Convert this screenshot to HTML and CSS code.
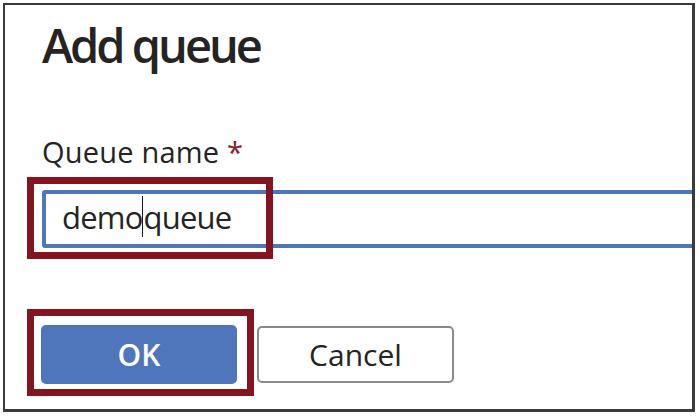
FILE: index.html
```html
<!DOCTYPE html>
<html lang="en">
<head>
<meta charset="utf-8">
<title>Add queue</title>
<link rel="stylesheet" href="styles.css">
</head>
<body>
<div class="frame">
  <h1 class="title">Add queue</h1>
  <div class="label">Queue name <span class="req">*</span></div>
  <div class="field">
    <div class="input"><span>demo</span><span class="caret"></span><span>queue</span></div>
    <div class="mark mark-input"></div>
  </div>
  <div class="actions">
    <div class="mark-btn"><button class="btn btn-primary" type="button">OK</button></div>
    <button class="btn btn-default" type="button">Cancel</button>
  </div>
</div>
</body>
</html>
```
FILE: styles.css
```css
html, body {
  margin: 0;
  padding: 0;
  background: #ffffff;
}
body {
  padding: 3px 0 0 3px;
  font-family: "Open Sans", "Noto Sans", sans-serif;
  color: #252423;
}
.frame {
  box-sizing: border-box;
  width: 692px;
  height: 409px;
  border: 2px solid #3a3a3a;
  border-right-width: 3px;
  border-bottom-width: 3px;
  padding: 12px 0 0 37px;
  overflow: hidden;
  background: #ffffff;
}
.title {
  margin: 0;
  font-size: 47px;
  line-height: 56px;
  font-weight: 600;
  letter-spacing: -3px;
}
.label {
  margin-top: 61px;
  font-size: 29px;
  line-height: 36px;
  letter-spacing: 0.2px;
}
.req {
  color: #8a1a2a;
}
.field {
  position: relative;
  margin-top: 20px;
  margin-right: -40px;
}
.input {
  box-sizing: border-box;
  height: 58px;
  border: 4px solid #4f75ba;
  border-radius: 3px;
  padding: 0 0 4px 16px;
  font-size: 31px;
  line-height: 46px;
  letter-spacing: -0.8px;
  display: flex;
  align-items: flex-start;
}
.caret {
  width: 1px;
  height: 41px;
  margin-top: 2px;
  margin-left: -1px;
  margin-right: 1px;
  background: #1a1a1a;
}
.mark {
  position: absolute;
  box-sizing: border-box;
  border: 7px solid #84141f;
}
.mark-input {
  left: -15px;
  top: -13px;
  width: 246px;
  height: 82px;
}
.actions {
  display: flex;
  align-items: flex-start;
  margin-top: 61px;
  margin-left: -15px;
  gap: 3px;
}
.mark-btn {
  border: 7px solid #84141f;
  padding: 9px 10px 5px 7px;
}
.btn {
  box-sizing: border-box;
  font-family: "Open Sans", "Noto Sans", sans-serif;
  font-size: 30px;
  border-radius: 5px;
  margin: 0;
  padding: 0;
}
.btn-primary {
  display: block;
  width: 196px;
  height: 59px;
  background: #4f75ba;
  border: none;
  color: #ffffff;
  font-weight: 600;
}
.btn-default {
  margin-top: 17px;
  width: 197px;
  height: 57px;
  background: #ffffff;
  border: 2px solid #8a8a8a;
  color: #252423;
  font-weight: 500;
}
```
